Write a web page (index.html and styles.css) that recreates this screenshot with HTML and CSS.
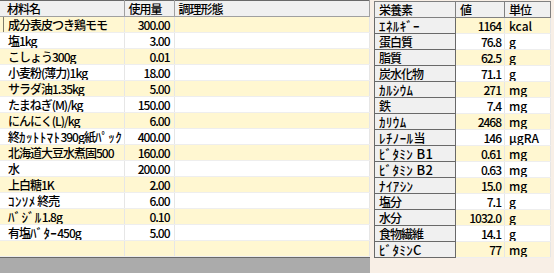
FILE: index.html
```html
<!DOCTYPE html>
<html lang="ja">
<head>
  <meta charset="UTF-8">
  <title>材料と栄養素</title>
  <link rel="stylesheet" href="styles.css">
</head>
<body>
  <div class="screen">
    <div class="materials">
      <table class="grid">
        <colgroup>
          <col class="c-name">
          <col class="c-qty">
          <col class="c-cook">
        </colgroup>
        <thead>
          <tr><th>材料名</th><th>使用量</th><th>調理形態</th></tr>
        </thead>
        <tbody>
          <tr class="current"><td>成分表皮つき鶏モモ</td><td class="num">300.00</td><td></td></tr>
          <tr><td>塩1kg</td><td class="num">3.00</td><td></td></tr>
          <tr><td>こしょう300g</td><td class="num">0.01</td><td></td></tr>
          <tr><td>小麦粉(薄力)1kg</td><td class="num">18.00</td><td></td></tr>
          <tr><td>サラダ油1.35kg</td><td class="num">5.00</td><td></td></tr>
          <tr><td>たまねぎ(M)/kg</td><td class="num">150.00</td><td></td></tr>
          <tr><td>にんにく(L)/kg</td><td class="num">6.00</td><td></td></tr>
          <tr><td>終<span class="kana">ｶｯﾄﾄﾏﾄ</span>390g紙<span class="kana">ﾊﾟｯｸ</span></td><td class="num">400.00</td><td></td></tr>
          <tr><td>北海道大豆水煮固500</td><td class="num">160.00</td><td></td></tr>
          <tr><td>水</td><td class="num">200.00</td><td></td></tr>
          <tr><td>上白糖1K</td><td class="num">2.00</td><td></td></tr>
          <tr><td><span class="kana">ｺﾝｿﾒ</span> 終売</td><td class="num">6.00</td><td></td></tr>
          <tr><td><span class="kana">ﾊﾞｼﾞﾙ</span>1.8g</td><td class="num">0.10</td><td></td></tr>
          <tr><td>有塩<span class="kana">ﾊﾞﾀｰ</span>450g</td><td class="num">5.00</td><td></td></tr>
          <tr><td></td><td></td><td></td></tr>
        </tbody>
      </table>
      <div class="grid-empty"></div>
    </div>

    <div class="nutrients">
      <table class="grid nutri">
        <colgroup>
          <col class="c-item">
          <col class="c-val">
          <col class="c-unit">
        </colgroup>
        <thead>
          <tr><th>栄養素</th><th>値</th><th>単位</th></tr>
        </thead>
        <tbody>
          <tr><th><span class="kana">ｴﾈﾙｷﾞｰ</span></th><td class="num">1164</td><td class="unit">kcal</td></tr>
          <tr><th>蛋白質</th><td class="num">76.8</td><td class="unit">g</td></tr>
          <tr><th>脂質</th><td class="num">62.5</td><td class="unit">g</td></tr>
          <tr><th>炭水化物</th><td class="num">71.1</td><td class="unit">g</td></tr>
          <tr><th><span class="kana">ｶﾙｼｳﾑ</span></th><td class="num">271</td><td class="unit">mg</td></tr>
          <tr><th>鉄</th><td class="num">7.4</td><td class="unit">mg</td></tr>
          <tr><th><span class="kana">ｶﾘｳﾑ</span></th><td class="num">2468</td><td class="unit">mg</td></tr>
          <tr><th><span class="kana">ﾚﾁﾉｰﾙ</span>当</th><td class="num">146</td><td class="unit">μgRA</td></tr>
          <tr><th><span class="kana">ﾋﾞﾀﾐﾝ B1</span></th><td class="num">0.61</td><td class="unit">mg</td></tr>
          <tr><th><span class="kana">ﾋﾞﾀﾐﾝ B2</span></th><td class="num">0.63</td><td class="unit">mg</td></tr>
          <tr><th><span class="kana">ﾅｲｱｼﾝ</span></th><td class="num">15.0</td><td class="unit">mg</td></tr>
          <tr><th>塩分</th><td class="num">7.1</td><td class="unit">g</td></tr>
          <tr><th>水分</th><td class="num">1032.0</td><td class="unit">g</td></tr>
          <tr><th>食物繊維</th><td class="num">14.1</td><td class="unit">g</td></tr>
          <tr><th><span class="kana">ﾋﾞﾀﾐﾝC</span></th><td class="num">77</td><td class="unit">mg</td></tr>
        </tbody>
      </table>
    </div>
  </div>
</body>
</html>
```

FILE: styles.css
```css
body {
  margin: 0;
  background-color: #f8efe6;
  font-family: "Noto Sans CJK JP", sans-serif;
  font-size: 12px;
  font-weight: 500;
  letter-spacing: -1px;
  color: #000;
}
.screen {
  display: flex;
  width: 554px;
  height: 273px;
  overflow: hidden;
}
.kana {
  font-size: 13px;
  letter-spacing: 0.4px;
  line-height: 0;
}
.materials {
  width: 370px;
  display: flex;
  flex-direction: column;
}
.grid {
  border-collapse: collapse;
  table-layout: fixed;
}
.grid th,
.grid td {
  height: 15px;
  padding: 0 4px;
  line-height: 15px;
  white-space: nowrap;
  overflow: hidden;
  font-weight: 500;
  text-align: left;
}
.materials .grid {
  width: 370px;
}
.c-name { width: 124px; }
.c-qty { width: 50px; }
.materials thead th {
  background-color: #f0f0f0;
  border-top: 1px solid #696969;
  border-bottom: 1px solid #a0a0a0;
  border-right: 1px solid #a0a0a0;
}
.materials thead th:first-child {
  padding-left: 7px;
}
.materials tbody td {
  border-bottom: 1px solid #eeeeee;
  border-right: 1px solid #e6e6e6;
}
.materials tbody td:first-child {
  padding-left: 8px;
  padding-right: 0;
}
.grid tbody tr:nth-child(odd) td {
  background-color: #fff7d1;
}
.grid tbody tr:nth-child(even) td {
  background-color: #fff;
}
.materials tr.current td:first-child {
  background-image: linear-gradient(#000 50%, transparent 50%);
  background-size: 1px 2px;
  background-position: 3px 0;
  background-repeat: repeat-y;
}
.grid td.num {
  text-align: right;
}
.grid-empty {
  flex: 1;
  background-color: #ababab;
  border-top: 1px solid #696969;
}
.nutrients {
  flex: 1;
  padding: 1px 0 0 4px;
}
.nutri {
  width: 177px;
  border: 1px solid #696969;
}
.c-item { width: 81px; }
.c-val { width: 49px; }
.nutri th {
  background-color: #f0f0f0;
  border: 1px solid #696969;
}
.nutri thead th {
  border-color: #808080;
}
.nutri thead th:first-child {
  padding-left: 4px;
}
.nutri tbody td {
  border-bottom: 1px solid #eeeeee;
  border-right: 1px solid #e6e6e6;
}
.nutri tbody td.num {
  padding-right: 3px;
}
.nutri td.unit {
  letter-spacing: 0;
}
```
